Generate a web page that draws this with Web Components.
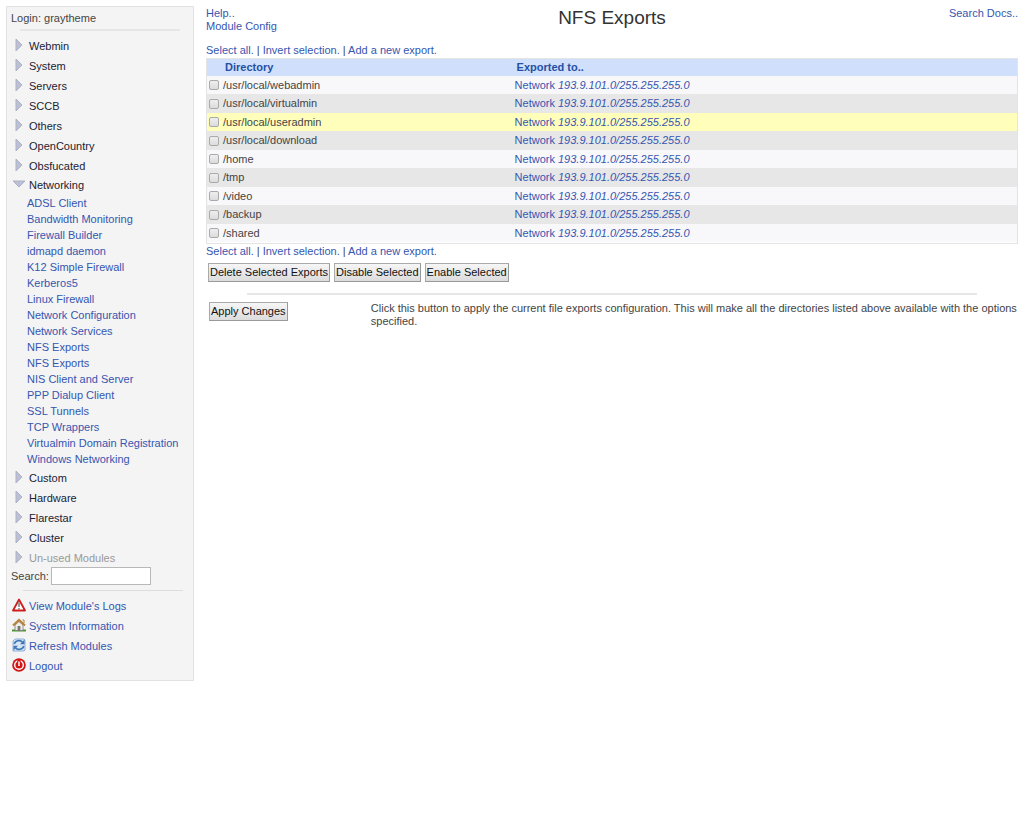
<!DOCTYPE html>
<html lang="en">
<head>
<meta charset="utf-8">
<title>NFS Exports</title>
<style>
body { margin: 6px; background: #fff; color: #444; font: 11px/13px "Liberation Sans", Arial, sans-serif; }
</style>
</head>
<body>
<webmin-app></webmin-app>
<script>
const BASE = `<style>
  * { box-sizing: border-box; }
  a { color: #3556b0; text-decoration: none; }
  hr { border: 0; height: 2px; background: #e6e6e6; margin: 0; }
</style>`;

class Base extends HTMLElement {
  connectedCallback() {
    if (!this.shadowRoot) this.attachShadow({ mode: 'open' }).innerHTML = BASE + this.render();
  }
}

customElements.define('nav-category', class extends Base {
  render() {
    const open = this.hasAttribute('open');
    const shape = open ? 'M1 4h12L7 10z' : 'M4 1v12L10 7z';
    return `<style>
      :host { display: block; }
      a { display: flex; align-items: center; height: ${open ? 19 : 20}px; padding-left: 1px; gap: 3px; color: #222233; }
      :host([muted]) a { color: #999; }
      svg { flex: none; margin-bottom: 3px; }
      .items { display: ${open ? 'block' : 'none'}; padding: 0 0 0 16px; margin-bottom: 1px; }
    </style>
    <a href="#"><svg width="14" height="14" viewBox="0 0 14 14"><path d="${shape}" fill="#bcc0d2" stroke="#adb2c8" stroke-width="1"/></svg><span>${this.getAttribute('label')}</span></a>
    <div class="items"><slot></slot></div>`;
  }
});

customElements.define('nav-item', class extends Base {
  render() {
    return `<style>:host { display: block; } a { display: block; height: 16px; line-height: 16px; }</style>
    <a href="#"><slot></slot></a>`;
  }
});

const ICONS = {
  logs: '<path d="M7 1.5L13 12.5H1z" fill="#fff" stroke="#cc1e1e" stroke-width="1.8" stroke-linejoin="round"/><path d="M7 4.5v4.5M7 10v1.2" stroke="#777" stroke-width="1.5"/>',
  home: '<path d="M0 12.5h14" stroke="#4f9a2f" stroke-width="2"/><path d="M3 7v5.5h8V7L7 3.5z" fill="#f0eee4" stroke="#777" stroke-width=".8"/><path d="M1 7.5L7 2l6 5.5" fill="none" stroke="#b9823c" stroke-width="2.2"/><path d="M5.6 8h2.8v5H5.6z" fill="#777"/><path d="M10.5 2h1.5v3" stroke="#b9823c" fill="none"/>',
  refresh: '<path d="M3 1h9l1 1v10l-1 1H1V3z" fill="#d7e6f7" stroke="#7ba0cf" stroke-width=".8"/><path d="M2.3 6C3 2.4 8.4 1.6 10.5 4.2M11.7 8C11 11.6 5.6 12.4 3.5 9.8" fill="none" stroke="#3f78b6" stroke-width="1.6"/><path d="M12.5 1.5v4.7H8zM1.5 12.5V7.8H6z" fill="#3f78b6"/>',
  logout: '<circle cx="7" cy="7" r="6.8" fill="#d11616"/><circle cx="7" cy="7" r="4.3" fill="none" stroke="#fff" stroke-width="1.4"/><path d="M7 2v5.4" stroke="#d11616" stroke-width="3.4"/><path d="M7 3.5v4.4" stroke="#fff" stroke-width="1.5"/>'
};
customElements.define('nav-action', class extends Base {
  render() {
    return `<style>
      :host { display: block; }
      a { display: flex; align-items: center; height: 20px; padding-left: 1px; gap: 3px; }
      svg { margin-bottom: 2px; }
    </style>
    <a href="#"><svg width="14" height="14" viewBox="0 0 14 14">${ICONS[this.getAttribute('icon')]}</svg><span><slot></slot></span></a>`;
  }
});

customElements.define('side-nav', class extends Base {
  render() {
    const cats = l => l.map(n => `<nav-category label="${n}"></nav-category>`).join('');
    const items = ['ADSL Client', 'Bandwidth Monitoring', 'Firewall Builder', 'idmapd daemon', 'K12 Simple Firewall', 'Kerberos5', 'Linux Firewall', 'Network Configuration', 'Network Services', 'NFS Exports', 'NFS Exports', 'NIS Client and Server', 'PPP Dialup Client', 'SSL Tunnels', 'TCP Wrappers', 'Virtualmin Domain Registration', 'Windows Networking'];
    return `<style>
      :host { display: block; box-sizing: border-box; width: 188px; border: 1px solid #e2e2e2; background: #f4f4f4; padding: 5px 4px 4px 4px; }
      .login { margin: 0 0 4px; }
      hr { margin: 0 9px 5px; }
      hr.low { height: 1px; margin: 5px 6px 5px 12px; background: #ddd; }
      nav { margin-bottom: -1px; }
      form { display: flex; align-items: center; gap: 2px; height: 18px; margin: 0; }
      input { width: 100px; height: 18px; border: 1px solid #b8b8b8; background: #fff; padding: 1px; font: inherit; }
    </style>
    <p class="login">Login: graytheme</p><hr>
    <nav>${cats(['Webmin', 'System', 'Servers', 'SCCB', 'Others', 'OpenCountry', 'Obsfucated'])}
    <nav-category label="Networking" open>${items.map(i => `<nav-item>${i}</nav-item>`).join('')}</nav-category>
    ${cats(['Custom', 'Hardware', 'Flarestar', 'Cluster'])}<nav-category label="Un-used Modules" muted></nav-category></nav>
    <form><label for="q">Search:</label><input id="q" type="text"></form><hr class="low">
    <nav-action icon="logs">View Module's Logs</nav-action>
    <nav-action icon="home">System Information</nav-action>
    <nav-action icon="refresh">Refresh Modules</nav-action>
    <nav-action icon="logout">Logout</nav-action>`;
  }
});

customElements.define('page-head', class extends Base {
  render() {
    return `<style>
      :host { display: grid; grid-template-columns: 1fr auto 1fr; padding-top: 1px; }
      h1 { margin: 0; font: 19px/22px "Liberation Sans", Arial, sans-serif; color: #333; }
      .left a { display: block; }
      .right { text-align: right; }
    </style>
    <div class="left"><a href="#">Help..</a><a href="#">Module Config</a></div>
    <h1>NFS Exports</h1><div class="right"><a href="#">Search Docs..</a></div>`;
  }
});

customElements.define('select-links', class extends Base {
  render() {
    return `<style>:host { display: block; }</style>
    <a href="#">Select all.</a> | <a href="#">Invert selection.</a> | <a href="#">Add a new export.</a>`;
  }
});

customElements.define('export-table', class extends Base {
  render() {
    const dirs = ['/usr/local/webadmin', '/usr/local/virtualmin', '/usr/local/useradmin', '/usr/local/download', '/home', '/tmp', '/video', '/backup', '/shared'];
    return `<style>
      :host { display: block; border: 1px solid #e4e4e4; padding-bottom: 1px; }
      table { width: 100%; border-collapse: collapse; table-layout: fixed; }
      th, td { padding: 0; text-align: left; font-size: 11px; line-height: 13px; }
      th { height: 17px; color: #2450a4; padding-left: 2px; }
      thead tr { background: #cfdffc; }
      tbody tr { background: #f8f8fa; height: 18px; }
      tbody tr:nth-child(even) { background: #e7e7e8; height: 19px; }
      tbody tr.hot { background: #ffffbb; }
      .c1 { width: 16px; } .c2 { width: 36%; }
      input { appearance: none; display: block; width: 10px; height: 10px; margin: 0 0 0 2px; border: 1px solid #aaa; border-radius: 2px; background: linear-gradient(#eee, #dcdcdc); }
    </style>
    <table><colgroup><col class="c1"><col class="c2"><col></colgroup>
    <thead><tr><th></th><th>Directory</th><th>Exported to..</th></tr></thead>
    <tbody>${dirs.map((d, i) => `<tr${i === 2 ? ' class="hot"' : ''}><td><input type="checkbox" id="d${i}"></td><td><label for="d${i}">${d}</label></td><td><a href="#">Network <i>193.9.101.0/255.255.255.0</i></a></td></tr>`).join('')}</tbody></table>`;
  }
});

customElements.define('push-button', class extends Base {
  render() {
    return `<style>
      :host { display: block; }
      button { display: block; height: 19px; padding: 0 1px; border: 1px solid #aaa; border-right-color: #999; border-bottom-color: #999; background: linear-gradient(#f6f6f6, #dcdcdc); color: #111; font: inherit; white-space: nowrap; }
    </style><button type="button"><slot></slot></button>`;
  }
});

customElements.define('webmin-app', class extends Base {
  render() {
    return `<style>
      :host { display: flex; align-items: flex-start; gap: 12px; }
      side-nav { flex: none; }
      main { flex: 1; min-width: 0; }
      .above { margin: 11px 0 1px; }
      .below { margin: 1px 0 5px; }
      .buttons { display: flex; gap: 4px; padding-left: 2px; }
      hr { margin: 11px 5% 7px; }
      .apply { display: grid; grid-template-columns: 20% 1fr; padding-left: 3px; }
      .apply p { margin: 0; }
    </style>
    <side-nav></side-nav>
    <main>
      <page-head></page-head>
      <select-links class="above"></select-links>
      <export-table></export-table>
      <select-links class="below"></select-links>
      <div class="buttons"><push-button>Delete Selected Exports</push-button><push-button>Disable Selected</push-button><push-button>Enable Selected</push-button></div>
      <hr>
      <div class="apply"><push-button>Apply Changes</push-button>
      <p>Click this button to apply the current file exports configuration. This will make all the directories listed above available with the options specified.</p></div>
    </main>`;
  }
});
</script>
</body>
</html>
